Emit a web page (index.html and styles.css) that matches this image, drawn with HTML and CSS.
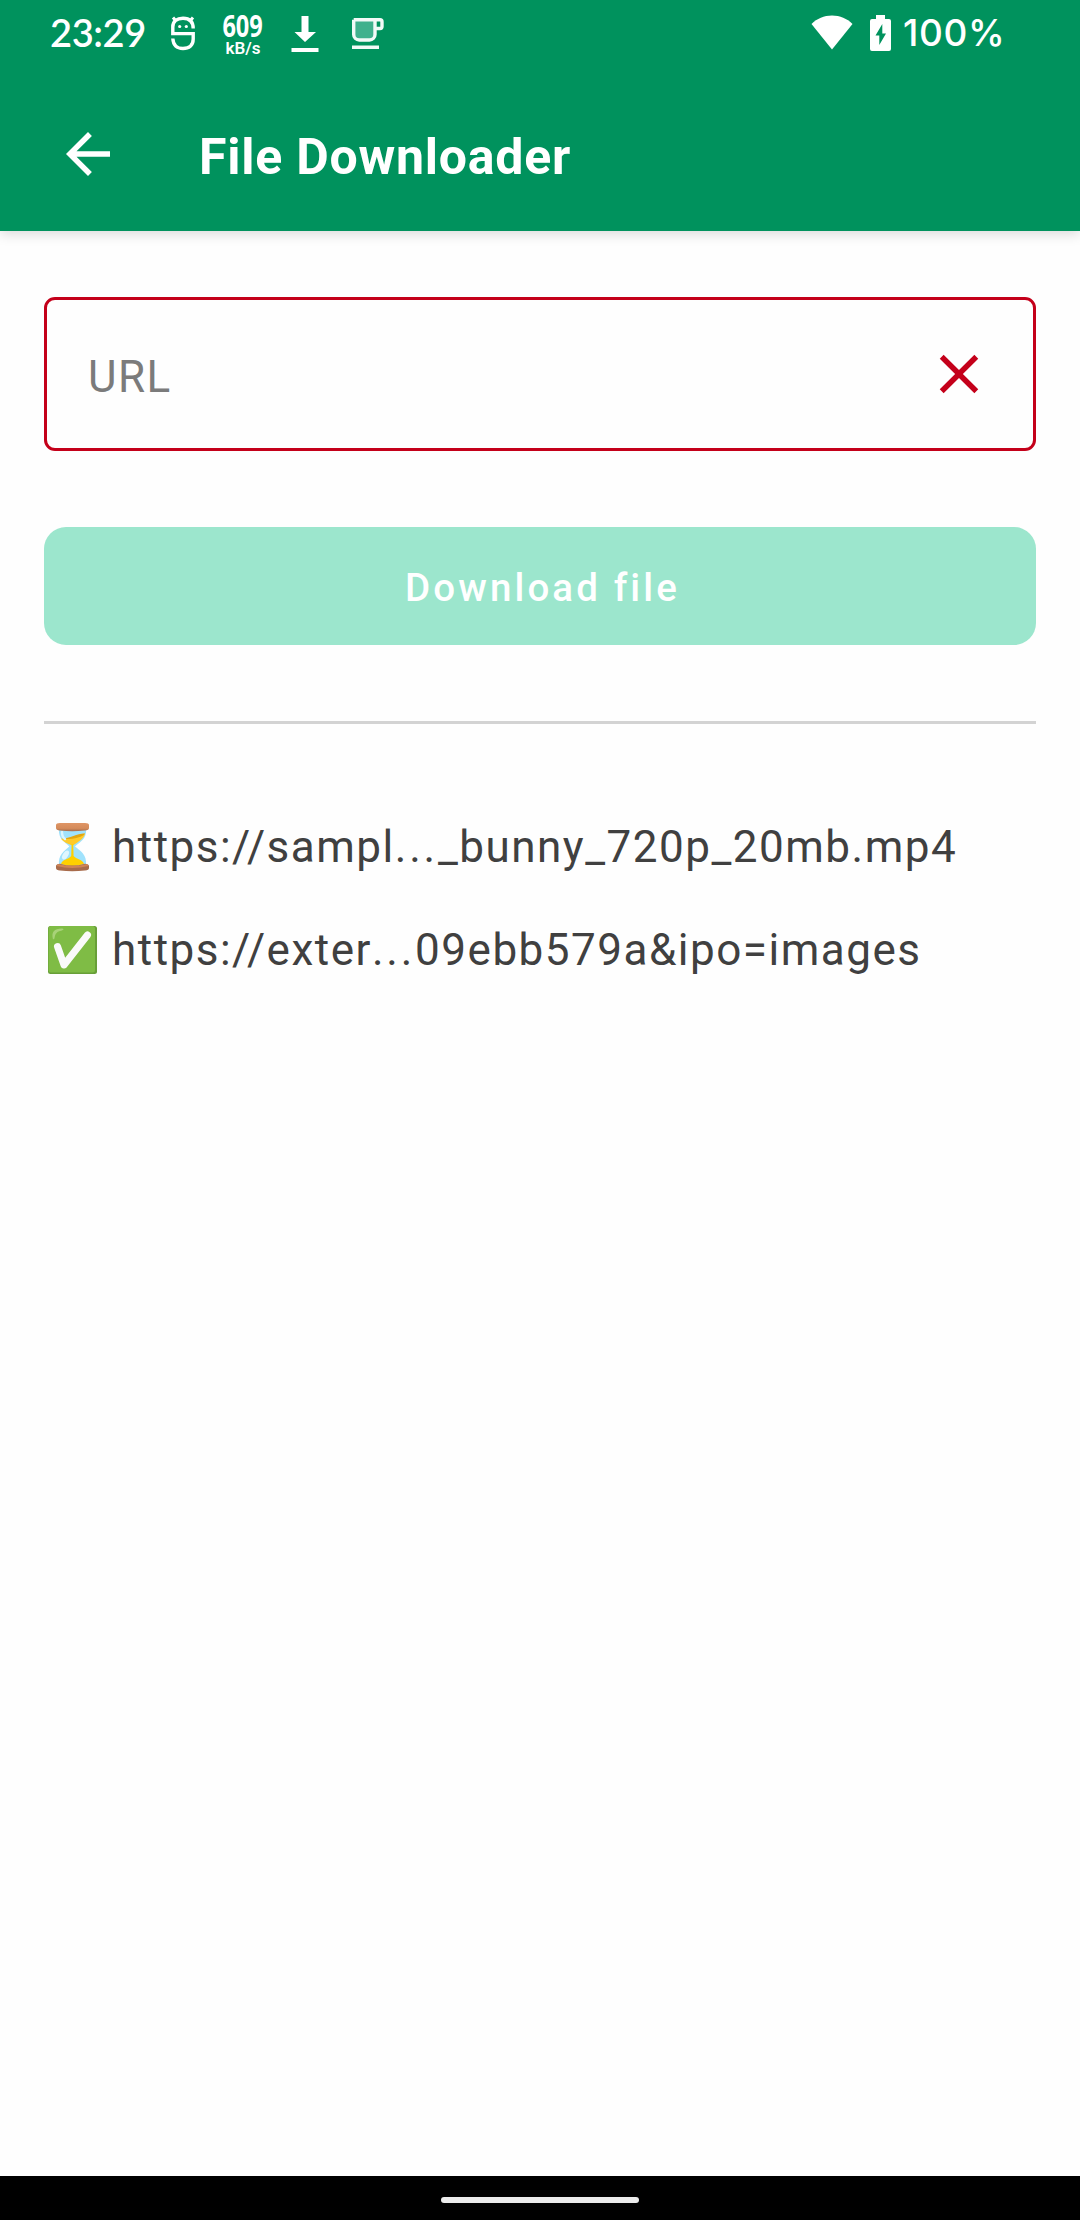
FILE: index.html
```html
<!DOCTYPE html>
<html lang="en">
<head>
<meta charset="utf-8">
<title>File Downloader</title>
<link rel="stylesheet" href="styles.css">
</head>
<body>
<header class="header">
  <div class="status">
    <span class="clock">23:29</span>
    <svg class="bot" width="28" height="36" viewBox="0 0 28 36" fill="none" stroke="#fff" stroke-width="3.4">
      <path d="M24.2 13.5C24.2 6 20 3.2 14 3.2S3.8 6 3.8 12V18.6H24.2V24C24.2 30.500 20 33.500 14 33.500S4.300 30.500 3.800 23.500"/>
      <path d="M4 2.500L6.600 5.500M24 2.500L21.400 5.500" stroke-width="3"/>
      <circle cx="10.700" cy="11.500" r="1.600" fill="#fff" stroke="none"/><circle cx="17.300" cy="11.500" r="1.600" fill="#fff" stroke="none"/>
    </svg>
    <div class="speed"><span class="speed-value">609</span><span class="speed-unit">kB/s</span></div>
    <svg class="dl" width="28" height="36" viewBox="0 0 28 36" fill="#fff"><path d="M10.500 0h7v16h7.500L14 26 3.500 16h7zM.500 32h27v4h-27z"/></svg>
    <svg class="cup" width="34" height="32" viewBox="0 0 34 32">
      <path d="M3 2h20.500v14.500a5.500 5.500 0 0 1-5.500 5.500H8.500A5.500 5.500 0 0 1 3 16.500z" fill="#40b18d"/>
      <path d="M2.700 1.800H29a2 2 0 0 1 2 2V8.500a2 2 0 0 1-2 2H24M24 2V16.500a5.500 5.500 0 0 1-5.500 5.500H8.200A5.500 5.500 0 0 1 2.700 16.500V1.800" fill="none" stroke="#f2faf7" stroke-width="3.400"/>
      <path d="M1 27.500h27v3.500H1z" fill="#f2faf7"/>
    </svg>
    <span class="grow"></span>
    <svg class="wifi" width="42" height="35" viewBox="0 0 42 35" fill="#fff"><path d="M.500 9C6 3.500 13 .500 21 .500S36 3.500 41.500 9L21 34.500z"/></svg>
    <svg class="battery" width="21" height="36" viewBox="0 0 21 36"><path d="M6 0h9v4h4a2 2 0 0 1 2 2v28a2 2 0 0 1-2 2H2a2 2 0 0 1-2-2V6a2 2 0 0 1 2-2h4z" fill="#fff"/><path d="M12.300 9L5.500 20.500H9.300V30L16 18.500H12.300z" fill="#00925d"/></svg>
    <span class="percent">100%</span>
  </div>
  <div class="toolbar">
    <svg class="back" width="66" height="66" viewBox="0 0 24 24" fill="#fff"><path d="M20 11H7.830l5.590-5.590L12 4l-8 8 8 8 1.410-1.410L7.830 13H20v-2z"/></svg>
    <h1 class="title">File Downloader</h1>
  </div>
</header>
<main class="content">
  <div class="field">
    <span class="placeholder">URL</span>
    <svg width="66" height="66" viewBox="0 0 24 24" fill="#c4001a"><path d="M19 6.410L17.590 5 12 10.590 6.410 5 5 6.410 10.590 12 5 17.590 6.410 19 12 13.410 17.590 19 19 17.590 13.410 12z"/></svg>
  </div>
  <button class="download" disabled>Download file</button>
  <hr class="divider">
  <ul class="list">
    <li class="item">
      <svg class="emoji" width="54" height="52" viewBox="0 0 54 52">
        <defs>
          <linearGradient id="wood" x2="0" y2="1"><stop stop-color="#df9565"/><stop offset=".65" stop-color="#d48b5b"/><stop offset="1" stop-color="#a56a4a"/></linearGradient>
        </defs>
        <path d="M15 8C14 18 21 21 25.300 25.500C20 30 14 34 15 44H42C43 34 37 30 31 25.500C36 21 43 18 42 8z" fill="#a0e2fc"/>
        <path d="M17 17.500C24 19 31 14 41 12.500C40 18 34 21 28.800 24.500C24 23 19 21 17 17.500z" fill="#ffca28"/>
        <path d="M17 17.500C25 18 34 12 41 12.500C39 17 24 19 17 17.500z" fill="#e2a610"/>
        <path d="M27.600 23H29.200L29.600 35C32 38 39 38.500 40 43Q28 47 17 43C18 38.500 25 38 27.200 35z" fill="#ffd000"/>
        <path d="M18 11Q18 16 21 18" stroke="#dcf5ff" stroke-width="2.400" fill="none" stroke-linecap="round"/>
        <ellipse cx="21.500" cy="34" rx="2.600" ry="5" transform="rotate(32 21.500 34)" fill="#dff6ff"/>
        <path d="M12 4Q12 2 16 2H41Q45 2 45 4V7Q45 9 41 9.500Q28 11 16 9.500Q12 9 12 7z" fill="url(#wood)"/>
        <path d="M12 45Q12 43 16 42.700Q28 46.500 41 42.700Q45 43 45 45V47Q45 49 41 49.500Q28 51 16 49.500Q12 49 12 47z" fill="#a86b4b"/>
        <path d="M12.500 45Q28 49 44.500 45L43 43Q28 47 14 43z" fill="#d08455"/>
      </svg>
      <span class="url">https://sampl<span class="dots">...</span>_bunny_720p_20mb.mp4</span>
    </li>
    <li class="item">
      <svg class="emoji" width="54" height="52" viewBox="0 0 54 52">
        <rect x="4" y="2" width="49" height="48" rx="2.500" fill="#689f38"/>
        <rect x="4.500" y="2" width="46.500" height="46.500" rx="2.500" fill="#7fbc45"/>
        <path d="M9 15.500C7 8 10 4.500 18 4.500C21 5 19 6.500 16 7C12 8 11 11 10.500 14.500z" fill="#b5d98a" opacity=".75"/>
        <path d="M13.500 22.500L20 41L43.500 11" fill="none" stroke="#fafafa" stroke-width="7" stroke-linecap="round" stroke-linejoin="round"/>
      </svg>
      <span class="url">https://exter<span class="dots">...</span>09ebb579a&amp;ipo=images</span>
    </li>
  </ul>
</main>
<footer class="nav"><span class="pill"></span></footer>
</body>
</html>
```
FILE: styles.css
```css
* { box-sizing: border-box; }

body {
  margin: 0;
  height: 2220px;
  display: flex;
  flex-direction: column;
  background: #fefefe;
  font-family: Roboto, sans-serif;
  overflow: hidden;
}

.header {
  height: 231px;
  background: #00925d;
  color: #fff;
  box-shadow: 0 3px 12px rgba(0, 0, 0, .15);
}

.status {
  height: 77px;
  padding: 15px 77px 0 50px;
  display: flex;
  align-items: flex-start;
}

.clock {
  width: 96px;
  margin-top: -1px;
  font: 600 38px/36px Lato, sans-serif;
  letter-spacing: -.4px;
  white-space: nowrap;
}

.percent {
  width: 100px;
  margin: -1px 0 0 12px;
  font: 500 37px/38px Inter, sans-serif;
  letter-spacing: .6px;
  white-space: nowrap;
}

.bot { margin-left: 23px; }

.speed {
  width: 42px;
  margin: -3px 0 0 25px;
  display: flex;
  flex-direction: column;
  align-items: center;
  gap: 3px;
}

.speed-value {
  font: 700 31px/26px "Open Sans", sans-serif;
  transform: scaleX(.76);
}

.speed-unit { font: 600 17px/14px Roboto, sans-serif; }
.dl { margin: 1px 0 0 27px; }
.cup { margin: 3px 0 0 32px; }
.grow { flex: 1; }
.battery { margin-left: 17px; }

.toolbar {
  height: 154px;
  padding: 44px 55px 0;
  display: flex;
}

.title {
  margin: 6px 0 0 78px;
  font-size: 50px;
  line-height: 60px;
  font-weight: 700;
  letter-spacing: .78px;
}

.content {
  flex: 1;
  padding: 66px 44px 0;
}

.field {
  height: 154px;
  padding: 0 41px 0 41px;
  display: flex;
  align-items: center;
  justify-content: space-between;
  border: 3px solid #c4001a;
  border-radius: 11px;
}

.placeholder {
  font-size: 44px;
  line-height: 52px;
  letter-spacing: 1.38px;
  color: #7b7b7b;
  padding-top: 5px;
}

.download {
  display: block;
  width: 100%;
  height: 118px;
  margin-top: 76px;
  padding: 3px 0 0 5px;
  border: 0;
  border-radius: 22px;
  background: #9ce6cd;
  color: #fff;
  font: 500 38.5px/46px Roboto, sans-serif;
  letter-spacing: 3.1px;
}

.divider {
  height: 3px;
  margin: 76px 0 0;
  border: 0;
  background: #d3d3d3;
}

.list {
  margin: 97px 0 0;
  padding: 0;
  list-style: none;
}

.item {
  height: 52px;
  margin-bottom: 51px;
  display: flex;
}

.url {
  margin-left: 14px;
  font-size: 44px;
  line-height: 52px;
  letter-spacing: 1.5px;
  color: #404040;
}

.dots { letter-spacing: 2.8px; }

.nav {
  height: 44px;
  background: #000;
  display: flex;
  justify-content: center;
  padding-top: 21px;
}

.pill {
  width: 198px;
  height: 6px;
  border-radius: 3px;
  background: #ececec;
}
```
